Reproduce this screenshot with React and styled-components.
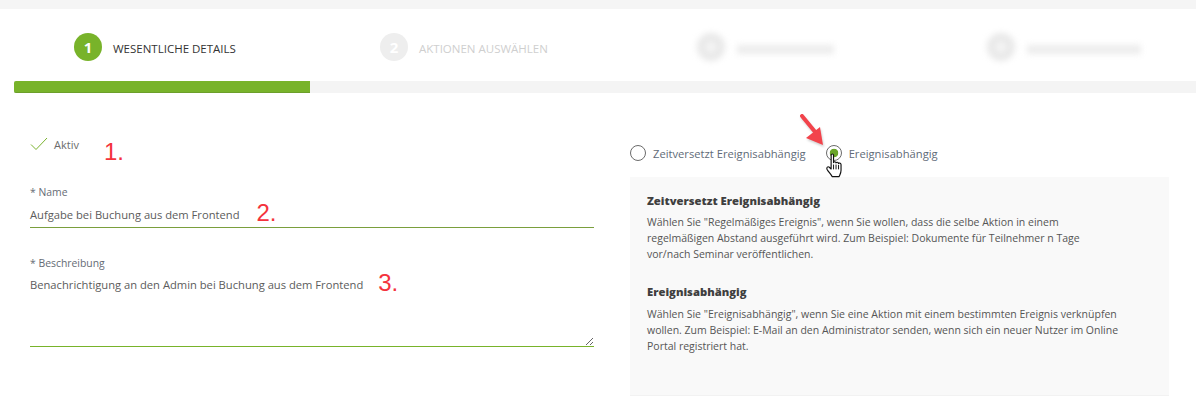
import React from "react";
import styled, { createGlobalStyle } from "styled-components";

const GlobalStyle = createGlobalStyle`
  html, body {
    margin: 0;
    padding: 0;
    background: #fff;
    font-family: "Open Sans", "Noto Sans", sans-serif;
    color: #595959;
  }
`;

const Check = () => (
  <svg width="18" height="14" viewBox="0 0 18 14" fill="none">
    <path d="M1 7.5 L6 12.5 L17 1" stroke="#7ab32e" strokeWidth="1" />
  </svg>
);

const Arrow = () => (
  <svg width="30" height="36" viewBox="0 0 30 36">
    <path
      d="M3 3 L17 20"
      stroke="#f2434b"
      strokeWidth="4"
      strokeLinecap="round"
    />
    <path d="M24 32 L7 25 L21 14 Z" fill="#f2434b" />
  </svg>
);

const Hand = () => (
  <svg width="19" height="25" viewBox="0 0 18 26">
    <path
      d="M5.5 2.2 C5.5 .6 8 .6 8 2.2 V10 C8.2 8.8 10.4 8.8 10.6 10.4 C10.8 9.2 13 9.4 13.2 11 C13.6 10 15.6 10.4 15.8 12 V18 C15.8 21 14.6 22.5 13.8 24.5 H6.5 C5.4 22 2.6 19.6 1.2 16.8 C.4 15 2.2 13.6 3.6 14.8 L5.5 16.6 Z"
      fill="#fff"
      stroke="#111"
      strokeWidth="1.2"
      strokeLinejoin="round"
    />
    <path d="M8 12 V17 M10.6 12 V17 M13.2 12.5 V17" stroke="#111" strokeWidth="1" />
  </svg>
);

export default function App() {
  return (
    <Page>
      <GlobalStyle />
      <TopBand />
      <Steps>
        <Step>
          <StepCircle $active>1</StepCircle>
          <StepLabel $active>WESENTLICHE DETAILS</StepLabel>
        </Step>
        <Step>
          <StepCircle>2</StepCircle>
          <StepLabel>AKTIONEN AUSWÄHLEN</StepLabel>
        </Step>
        <BlurredStep>
          <BlurredCircle />
          <BlurredBar $width={97} />
        </BlurredStep>
        <BlurredStep>
          <BlurredCircle />
          <BlurredBar $width={114} />
        </BlurredStep>
      </Steps>
      <Track>
        <TrackFill />
      </Track>
      <Columns>
        <FormColumn>
          <ActiveRow>
            <Check />
            <ActiveText>Aktiv</ActiveText>
            <ActiveNote>1.</ActiveNote>
          </ActiveRow>
          <NameField>
            <FieldLabel>* Name</FieldLabel>
            <NameValue>
              Aufgabe bei Buchung aus dem Frontend
              <Note $gap={17}>2.</Note>
            </NameValue>
          </NameField>
          <DescField>
            <FieldLabel>* Beschreibung</FieldLabel>
            <DescValue>
              Benachrichtigung an den Admin bei Buchung aus dem Frontend
              <Note $gap={15}>3.</Note>
            </DescValue>
          </DescField>
        </FormColumn>
        <InfoColumn>
          <RadioRow>
            <Radio>
              <RadioCircle />
              Zeitversetzt Ereignisabhängig
            </Radio>
            <Radio>
              <RadioCircle $checked>
                <ArrowSpot>
                  <Arrow />
                </ArrowSpot>
                <HandSpot>
                  <Hand />
                </HandSpot>
              </RadioCircle>
              Ereignisabhängig
            </Radio>
          </RadioRow>
          <InfoPanel>
            <InfoTitle>Zeitversetzt Ereignisabhängig</InfoTitle>
            <InfoText $top={5}>
              Wählen Sie "Regelmäßiges Ereignis", wenn Sie wollen, dass die selbe Aktion in einem
              <br />
              regelmäßigen Abstand ausgeführt wird. Zum Beispiel: Dokumente für Teilnehmer n Tage
              <br />
              vor/nach Seminar veröffentlichen.
            </InfoText>
            <InfoTitle>Ereignisabhängig</InfoTitle>
            <InfoText $top={6}>
              Wählen Sie "Ereignisabhängig", wenn Sie eine Aktion mit einem bestimmten Ereignis verknüpfen
              <br />
              wollen. Zum Beispiel: E-Mail an den Administrator senden, wenn sich ein neuer Nutzer im Online
              <br />
              Portal registriert hat.
            </InfoText>
          </InfoPanel>
        </InfoColumn>
      </Columns>
    </Page>
  );
}

const Page = styled.div`
  width: 1196px;
  height: 400px;
  overflow: hidden;
  background: #fff;
`;

const TopBand = styled.div`
  height: 9px;
  background: #f5f5f5;
`;

const Steps = styled.div`
  display: grid;
  grid-template-columns: 306px 317px 290px 1fr;
  padding: 24px 0 0 74px;
  height: 48px;
`;

const Step = styled.div`
  display: flex;
  align-items: flex-start;
  gap: 11px;
`;

const StepCircle = styled.div`
  width: 28px;
  height: 28px;
  border-radius: 50%;
  background: ${(p) => (p.$active ? "#78b32a" : "#eeeeee")};
  color: #fff;
  font-size: 15px;
  font-weight: 700;
  line-height: 28px;
  text-align: center;
`;

const StepLabel = styled.div`
  font-size: 11.5px;
  line-height: 32px;
  color: ${(p) => (p.$active ? "#333333" : "#cfcfcf")};
`;

const BlurredStep = styled.div`
  display: flex;
  align-items: center;
  gap: 12px;
  height: 28px;
  filter: blur(3px);
`;

const BlurredCircle = styled.div`
  width: 28px;
  height: 28px;
  box-sizing: border-box;
  border-radius: 50%;
  border: 8px solid #e8e8e8;
  background: #f4f4f4;
`;

const BlurredBar = styled.div`
  width: ${(p) => p.$width}px;
  height: 9px;
  margin-top: 4px;
  background: #ececec;
`;

const Track = styled.div`
  margin-left: 14px;
  height: 12px;
  background: #f4f4f4;
`;

const TrackFill = styled.div`
  width: 296px;
  height: 12px;
  box-sizing: border-box;
  background: #78b32a;
  border-bottom: 1px solid #6c9f2a;
  border-radius: 2px 0 0 2px;
`;

const Columns = styled.div`
  display: grid;
  grid-template-columns: 564px 539px;
  gap: 36px;
  padding-left: 30px;
`;

const FormColumn = styled.div`
  display: flex;
  flex-direction: column;
`;

const ActiveRow = styled.div`
  display: flex;
  align-items: center;
  height: 20px;
  margin-top: 41px;
  font-size: 11px;
`;

const ActiveText = styled.span`
  margin-left: 6px;
  margin-right: 25px;
  color: #6b6b6b;
`;

const Note = styled.span`
  display: inline-block;
  margin-left: ${(p) => p.$gap}px;
  font-family: "Liberation Sans", Arial, sans-serif;
  font-size: 24px;
  line-height: 24px;
  vertical-align: -2px;
  color: #f4333c;
`;

const ActiveNote = styled(Note)`
  margin-left: 0;
  margin-top: 16px;
`;

const NameField = styled.div`
  margin-top: 31px;
`;

const FieldLabel = styled.div`
  font-size: 10.4px;
  line-height: 14px;
  color: #666c75;
`;

const NameValue = styled.div`
  height: 29px;
  padding-top: 2px;
  box-sizing: border-box;
  border-bottom: 1px solid #7a9f3d;
  font-size: 11.2px;
  line-height: 18px;
  color: #5c5c5c;
`;

const DescField = styled.div`
  margin-top: 28px;
`;

const DescValue = styled.div`
  height: 79px;
  margin-top: -2px;
  padding-top: 3px;
  box-sizing: border-box;
  border-bottom: 1px solid #78b32a;
  font-size: 11.2px;
  line-height: 18px;
  color: #5c5c5c;
  overflow: auto;
  resize: vertical;
`;

const InfoColumn = styled.div`
  display: flex;
  flex-direction: column;
`;

const RadioRow = styled.div`
  display: flex;
  gap: 20px;
  height: 16px;
  margin-top: 52px;
`;

const Radio = styled.label`
  display: flex;
  align-items: center;
  gap: 7px;
  font-size: 11.2px;
  color: #5f6b78;
`;

const RadioCircle = styled.span`
  position: relative;
  width: 16px;
  height: 16px;
  box-sizing: border-box;
  border: 1px solid #6b6b6b;
  border-radius: 50%;
  background: ${(p) =>
    p.$checked
      ? "radial-gradient(circle, #6aa52a 0 4px, #fff 4.6px)"
      : "#fff"};
`;

const ArrowSpot = styled.span`
  position: absolute;
  left: -28px;
  top: -33px;
  filter: drop-shadow(1px 2px 1px rgba(0, 0, 0, 0.18));
`;

const HandSpot = styled.span`
  position: absolute;
  left: -2px;
  top: 7px;
`;

const InfoPanel = styled.div`
  margin-top: 16px;
  height: 219px;
  box-sizing: border-box;
  padding: 16px 17px 0;
  background: #f9f9f9;
  border-bottom: 1px solid #f2f2f2;
`;

const InfoTitle = styled.div`
  font-size: 11.25px;
  font-weight: 800;
  line-height: 16px;
  color: #3f3f3f;
`;

const InfoText = styled.p`
  margin: ${(p) => p.$top}px 0 22px;
  font-size: 10.5px;
  line-height: 16px;
  white-space: nowrap;
  color: #555555;
`;
